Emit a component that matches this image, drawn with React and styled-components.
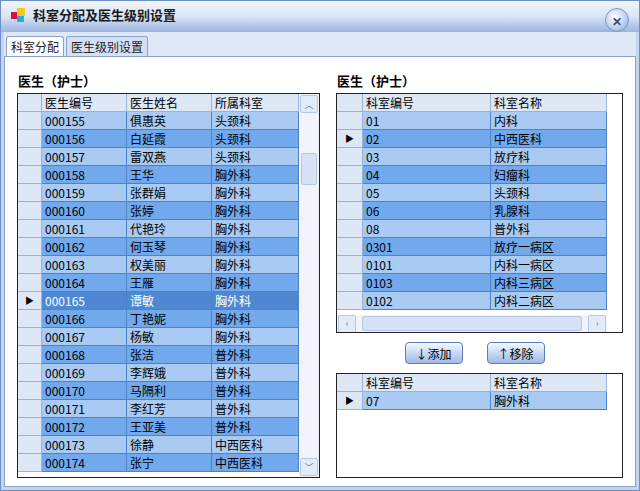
import React from "react";
import styled, { createGlobalStyle } from "styled-components";

const G = createGlobalStyle`
  body{margin:0;font-family:"SimSun","Noto Sans CJK SC",sans-serif;font-size:12px;}
`;
const Win = styled.div`
  width:640px;height:491px;box-sizing:border-box;background:#c5d5ef;
  border:1px solid #6d8fc8;display:flex;flex-direction:column;
`;
const Title = styled.div`
  height:37px;display:flex;align-items:center;padding:0 10px 4px;gap:6px;box-sizing:border-box;
  background:linear-gradient(#f2f6fc,#d9e4f5 50%,#b3c7e8 80%,#9cb5e0);
  font-weight:bold;font-size:13px;color:#1a1a1a;position:relative;
`;
const Close = styled.div`
  position:absolute;right:10px;top:7px;width:22px;height:22px;border-radius:50%;
  background:radial-gradient(circle at 40% 35%,#fff,#b9cdee 60%,#7d9bd0);
  border:1px solid #7b97c6;display:flex;align-items:center;justify-content:center;
  color:#334a78;font-weight:bold;font-size:12px;
`;
const Body = styled.div`
  flex:1;margin:0 3px 3px;display:flex;flex-direction:column;background:#dfe8f6;
`;
const Tabs = styled.div`display:flex;padding:4px 2px 0;gap:2px;`;
const Tab = styled.div`
  padding:1px 4px;border:1px solid #8aa2c8;border-bottom:none;font-size:12px;
  background:${p=>p.$a?"#fff":"#d5e1f3"};border-radius:3px 3px 0 0;color:#222;
`;
const Panel = styled.div`
  flex:1;background:#fff;border:1px solid #8aa2c8;display:flex;gap:16px;padding:12px 12px 8px;
`;
const Col = styled.div`display:flex;flex-direction:column;width:${p=>p.$w}px;`;
const H = styled.div`font-weight:bold;font-size:13px;height:22px;display:flex;align-items:center;padding-left:1px;margin-bottom:2px;`;
const Grid = styled.div`
  border:1px solid #222;background:${p=>p.$bg||"#fff"};height:${p=>p.$h}px;overflow:hidden;display:flex;position:relative;
`;
const Table = styled.div`display:flex;flex-direction:column;`;
const Row = styled.div`
  display:grid;grid-template-columns:${p=>p.$cols};height:18px;
  background:${p=>p.$bg};color:${p=>p.$sel?"#fff":"#000"};
  & > div{border-right:1px solid #4d82c6;border-bottom:1px solid #4d82c6;padding-left:3px;line-height:17px;white-space:nowrap;overflow:hidden;}
  & > div:first-child{background:#dde7f5;border-color:#9bb2d4;padding:0;display:flex;align-items:center;justify-content:center;font-size:9px;color:#000;}
`;
const HRow = styled(Row)`
  & > div{background:#dde7f5;border-color:#9bb2d4;}
`;
const VBar = styled.div`
  width:20px;background:#f1f4fa;display:flex;flex-direction:column;justify-content:space-between;align-items:center;padding:1px 0;
`;
const Arrow = styled.div`
  width:16px;height:16px;border:1px solid #b5c8e6;border-radius:2px;background:#e2ebf8;color:#4d6fa6;
  font-size:9px;display:flex;align-items:center;justify-content:center;
`;
const Thumb = styled.div`width:14px;height:30px;background:#d6e3f6;border:1px solid #b5c8e6;border-radius:2px;`;
const HBar = styled.div`
  position:absolute;left:0;bottom:0;width:270px;height:17px;background:#f1f4fa;display:flex;align-items:center;justify-content:space-between;padding:0 1px;box-sizing:border-box;
`;
const HThumb = styled.div`flex:1;height:13px;margin:0 2px 0 2px;background:#d6e3f6;border:1px solid #b5c8e6;border-radius:2px;max-width:218px;`;
const Btns = styled.div`display:flex;justify-content:center;gap:24px;height:40px;align-items:center;padding-right:10px;`;
const Btn = styled.div`
  width:56px;height:20px;border:1px solid #5a7eb8;border-radius:4px;
  background:linear-gradient(#f6f9fe,#c4d6f2 55%,#9fbbe6);display:flex;align-items:center;justify-content:center;font-size:12px;
`;

const docs=[["000155","俱惠英","头颈科"],["000156","白延霞","头颈科"],["000157","雷双燕","头颈科"],["000158","王华","胸外科"],["000159","张群娟","胸外科"],["000160","张婷","胸外科"],["000161","代艳玲","胸外科"],["000162","何玉琴","胸外科"],["000163","权美丽","胸外科"],["000164","王雁","胸外科"],["000165","谭敏","胸外科"],["000166","丁艳妮","胸外科"],["000167","杨敏","胸外科"],["000168","张洁","普外科"],["000169","李辉娥","普外科"],["000170","马隔利","普外科"],["000171","李红芳","普外科"],["000172","王亚美","普外科"],["000173","徐静","中西医科"],["000174","张宁","中西医科"]];
const depts=[["01","内科"],["02","中西医科"],["03","放疗科"],["04","妇瘤科"],["05","头颈科"],["06","乳腺科"],["08","普外科"],["0301","放疗一病区"],["0101","内科一病区"],["0103","内科三病区"],["0102","内科二病区"]];
const bg=(i,sel)=>sel?"#4f88d0":i%2?"#72a9ec":"#a9cbf3";
const Tri=()=> <span>▶</span>;

export default function App(){
  const lc="24px 85px 85px 87px", rc="26px 128px 116px";
  return <><G/><Win>
    <Title><svg width="16" height="16"><rect x="0" y="5" width="7" height="7" fill="#d4143c"/><rect x="6" y="1" width="8" height="8" fill="#f2c81c"/><rect x="6" y="9" width="7" height="6" fill="#2aa9e0"/></svg>科室分配及医生级别设置<Close>✕</Close></Title>
    <Body>
      <Tabs><Tab $a>科室分配</Tab><Tab>医生级别设置</Tab></Tabs>
      <Panel>
        <Col $w={303}>
          <H>医生（护士）</H>
          <Grid $h={383} $bg="#fff">
            <Table>
              <HRow $cols={lc}><div/><div>医生编号</div><div>医生姓名</div><div>所属科室</div></HRow>
              {docs.map((d,i)=><Row key={i} $cols={lc} $bg={bg(i,i===10)} $sel={i===10}><div>{i===10&&<Tri/>}</div><div>{d[0]}</div><div>{d[1]}</div><div>{d[2]}</div></Row>)}
            </Table>
            <VBar><div style={{display:"flex",flexDirection:"column",gap:40,alignItems:"center"}}><Arrow>︿</Arrow><Thumb/></div><Arrow>﹀</Arrow></VBar>
          </Grid>
        </Col>
        <Col $w={288}>
          <H>医生（护士）</H>
          <Grid $h={238} $bg="#fff">
            <Table>
              <HRow $cols={rc}><div/><div>科室编号</div><div>科室名称</div></HRow>
              {depts.map((d,i)=><Row key={i} $cols={rc} $bg={bg(i)}><div>{i===1&&<Tri/>}</div><div>{d[0]}</div><div>{d[1]}</div></Row>)}
            </Table>
            <HBar><Arrow>‹</Arrow><HThumb/><Arrow>›</Arrow></HBar>
          </Grid>
          <Btns><Btn>↓添加</Btn><Btn>↑移除</Btn></Btns>
          <Grid $h={103} $bg="#fff">
            <Table>
              <HRow $cols={rc}><div/><div>科室编号</div><div>科室名称</div></HRow>
              <Row $cols={rc} $bg="#a9cbf3"><div><Tri/></div><div>07</div><div>胸外科</div></Row>
            </Table>
          </Grid>
        </Col>
      </Panel>
    </Body>
  </Win></>;
}
